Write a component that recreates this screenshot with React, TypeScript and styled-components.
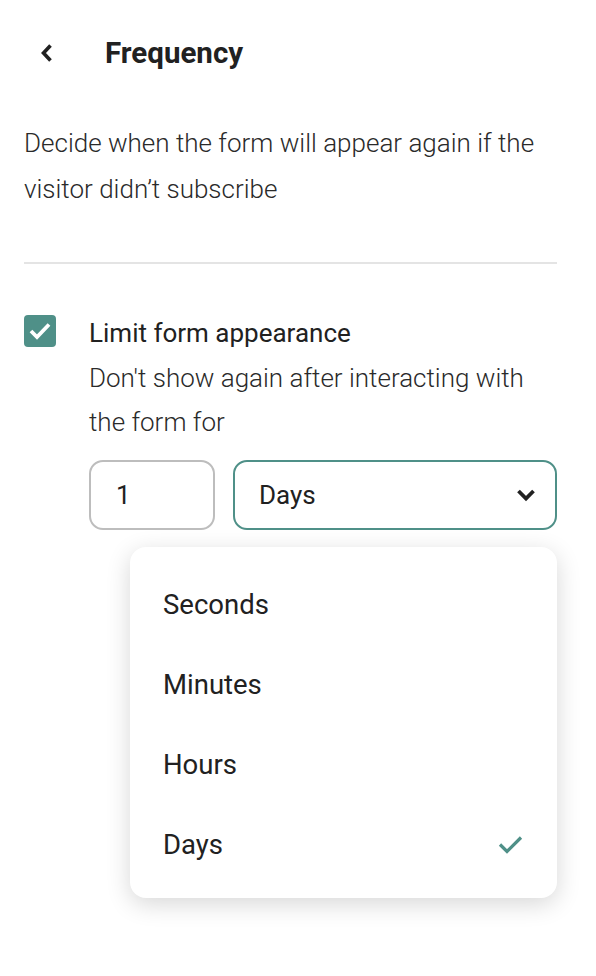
import styled, { createGlobalStyle } from 'styled-components'

const ACCENT = '#4f9088'
const TEXT = '#212121'

const OPTIONS = ['Seconds', 'Minutes', 'Hours', 'Days']

export default function App() {
  const selected = 'Days'

  return (
    <>
      <GlobalStyle />
      <Page>
        <Header>
          <BackButton aria-label="Back">
            <svg width="14" height="20" viewBox="0 0 14 20">
              <path d="M10.5 2.5 L3.5 10 L10.5 17.5" fill="none" stroke={TEXT} strokeWidth="3.6" />
            </svg>
          </BackButton>
          <Title>Frequency</Title>
        </Header>
        <Description>
          Decide when the form will appear again if the visitor didn’t subscribe
        </Description>
        <Divider />
        <OptionRow>
          <Checkbox>
            <svg width="24" height="20" viewBox="0 0 24 20">
              <path d="M3 10 L9 16 L21 3.5" fill="none" stroke="#fff" strokeWidth="3.8" />
            </svg>
          </Checkbox>
          <OptionBody>
            <OptionTitle>Limit form appearance</OptionTitle>
            <OptionHint>Don't show again after interacting with the form for</OptionHint>
            <Fields>
              <NumberBox>1</NumberBox>
              <SelectBox>
                Days
                <svg width="20" height="14" viewBox="0 0 20 14">
                  <path d="M2.5 3 L10 10.5 L17.5 3" fill="none" stroke={TEXT} strokeWidth="3.8" />
                </svg>
              </SelectBox>
              <Menu>
                {OPTIONS.map((option) => (
                  <MenuItem key={option}>
                    {option}
                    {option === selected && (
                      <svg width="25" height="19" viewBox="0 0 25 19">
                        <path d="M2 9.5 L9 16.5 L23 2.5" fill="none" stroke={ACCENT} strokeWidth="3.2" />
                      </svg>
                    )}
                  </MenuItem>
                ))}
              </Menu>
            </Fields>
          </OptionBody>
        </OptionRow>
      </Page>
    </>
  )
}

const GlobalStyle = createGlobalStyle`
  body {
    margin: 0;
    background: #fff;
    font-family: Roboto, 'Liberation Sans', sans-serif;
    color: ${TEXT};
  }
`

const Page = styled.div`
  width: 596px;
  height: 976px;
  box-sizing: border-box;
  padding: 0 39px 0 24px;
`

const Header = styled.div`
  display: flex;
  align-items: center;
  height: 106px;
`

const BackButton = styled.div`
  display: flex;
  align-items: center;
  justify-content: center;
  width: 14px;
  margin-left: 16px;
  margin-right: 51px;
`

const Title = styled.h1`
  margin: 0;
  font-size: 29.5px;
  font-weight: 700;
`

const Description = styled.p`
  margin: 14px 0 0;
  font-size: 26px;
  font-weight: 300;
  line-height: 46px;
  color: #2a2a2a;
`

const Divider = styled.hr`
  margin: 50px 0 0;
  border: none;
  border-top: 2px solid #e4e4e4;
`

const OptionRow = styled.div`
  display: flex;
  gap: 33px;
  margin-top: 49px;
`

const Checkbox = styled.div`
  flex: none;
  display: flex;
  align-items: center;
  justify-content: center;
  width: 32px;
  height: 32px;
  border-radius: 4px;
  background: ${ACCENT};
  margin-top: 2px;
`

const OptionBody = styled.div`
  flex: 1;
  display: flex;
  flex-direction: column;
`

const OptionTitle = styled.div`
  font-size: 26px;
  font-weight: 400;
  line-height: 40px;
`

const OptionHint = styled.div`
  margin-top: 3px;
  font-size: 26px;
  font-weight: 300;
  line-height: 44px;
  color: #2a2a2a;
`

const Fields = styled.div`
  position: relative;
  display: flex;
  gap: 18px;
  margin-top: 16px;
`

const fieldBox = `
  box-sizing: border-box;
  height: 70px;
  border-radius: 14px;
  display: flex;
  align-items: center;
  font-size: 26px;
  background: #fff;
`

const NumberBox = styled.div`
  ${fieldBox}
  width: 126px;
  padding-left: 25px;
  border: 2px solid #bdbdbd;
`

const SelectBox = styled.div`
  ${fieldBox}
  flex: 1;
  justify-content: space-between;
  padding: 0 19px 0 24px;
  border: 2px solid ${ACCENT};
`

const Menu = styled.div`
  position: absolute;
  top: 87px;
  left: 41px;
  right: 0;
  padding: 17px 0 14px;
  background: #fff;
  border-radius: 16px;
  box-shadow: 0 6px 24px rgba(0, 0, 0, 0.16);
`

const MenuItem = styled.div`
  display: flex;
  align-items: center;
  justify-content: space-between;
  height: 80px;
  padding: 0 34px 0 33px;
  font-size: 27.5px;
  font-weight: 400;
`
